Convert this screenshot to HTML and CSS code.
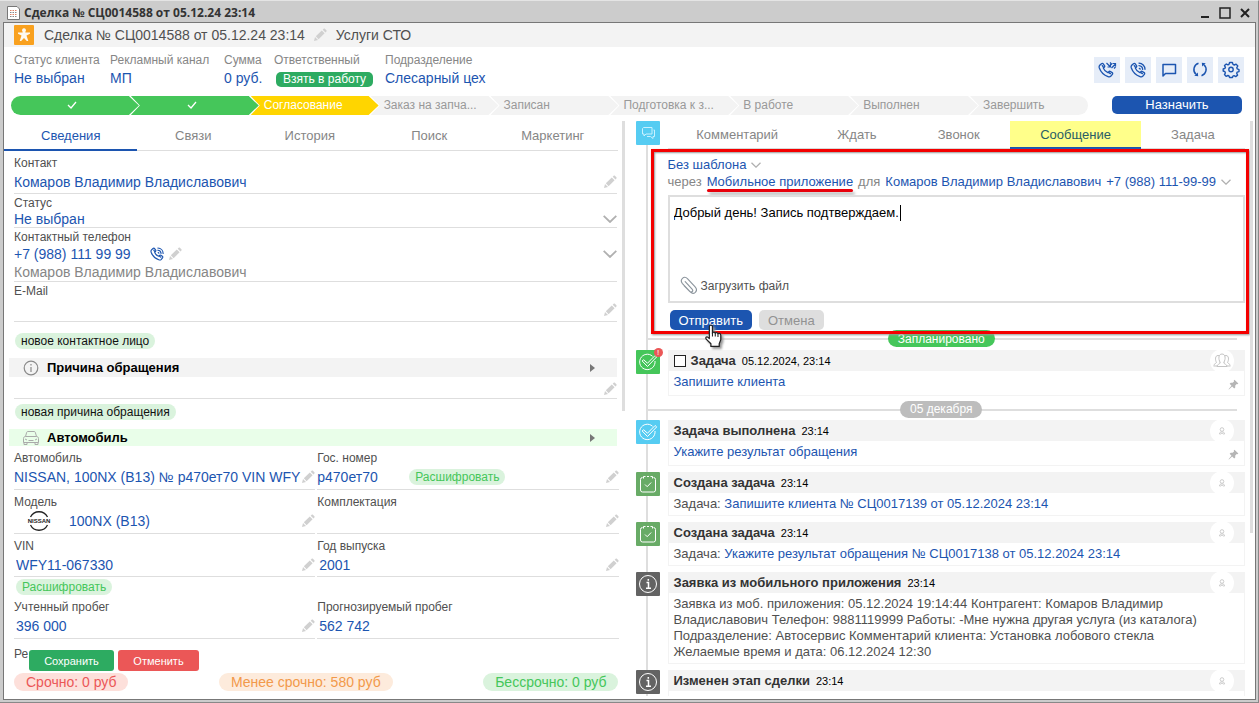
FILE: index.html
```html
<!DOCTYPE html>
<html lang="ru">
<head>
<meta charset="utf-8">
<title>Сделка № СЦ0014588 от 05.12.24 23:14</title>
<link rel="stylesheet" href="styles.css">
</head>
<body>
<svg class="sprite" aria-hidden="true">
  <symbol id="pencil" viewBox="0 0 14 14"><path fill="currentColor" d="M1 13l1-4 3 3zM2.800 8.300l6-5.800 2.800 2.800-6 5.900zM9.700 1.700l1-.9c.4-.3.800-.3 1.200 0l1.500 1.500c.4.4.3.900 0 1.300l-.9.900z"/></symbol>
  <symbol id="chevron" viewBox="0 0 14 8"><path fill="none" stroke="currentColor" stroke-width="1.800" d="M.7.8L7 7 13.300.8"/></symbol>
  <symbol id="phone" viewBox="0 0 24 24"><path fill="none" stroke="currentColor" stroke-width="2" stroke-linecap="round" stroke-linejoin="round" d="M21.500 18.500l-2.500 3c-1 1-2.600.9-4 .4C9.500 20 4 14.500 2 9c-.5-1.500-.4-3 .6-4l2.600-2.500c.9-.8 2-.7 2.700.2l1.800 2.600c.6.9.4 1.800-.3 2.500L8 9.200c1 2.700 4 5.600 6.800 6.700l1.400-1.400c.7-.7 1.600-.8 2.500-.3l2.500 1.700c.9.7 1.100 1.700.3 2.600zM6.500 5.500l2 2.800M15.800 15.500l2.800 2"/></symbol>
  <symbol id="waves" viewBox="0 0 24 24"><path fill="none" stroke="currentColor" stroke-width="2" stroke-linecap="round" d="M14 9.500c.7 0 1.200.4 1.200 1.200M13.500 5.500a6 6 0 0 1 5.500 5.500M13.500 1.700A9.500 9.500 0 0 1 22.500 11"/></symbol>
  <symbol id="person" viewBox="0 0 24 24"><g fill="none" stroke="currentColor" stroke-width="1"><circle cx="12" cy="10.500" r="1.800"/><path d="M9.500 15c0-1.500 1-2.200 2.500-2.200s2.500.7 2.500 2.200H13.500L12 14l-1.500 1z"/></g></symbol>
  <symbol id="pin" viewBox="0 0 12 12"><path fill="currentColor" d="M7 .7L11.300 5l-1 .7-.8-.2-1.600 1.700v2L6.800 10.300 4.500 8.100 1 11.400l-.4-.3 3.200-3.700-2-2.100 1.200-1.100h2L6.600 2.600l-.3-1z"/></symbol>
  <symbol id="check-circle" viewBox="0 0 24 24"><g fill="none" stroke="currentColor" stroke-width="1"><path d="M16.500 6.200A7.700 7.700 0 1 0 19 11"/><path d="M6.200 11l1.300-1.300 4 3.500 7.600-7.700 1.600 1.400-9.200 9.600z"/></g></symbol>
  <symbol id="clipboard" viewBox="0 0 24 24"><g fill="none" stroke="currentColor" stroke-width="1"><path d="M6.500 5.500a2 2 0 0 0-2 2V18a2 2 0 0 0 2 2h11a2 2 0 0 0 2-2V7.500a2 2 0 0 0-2-2M7.500 6.500v-2h2M11 4.500h2M14.500 4.500h2v2"/><path d="M9 12.500l2.200 2.200 4-4.200"/></g></symbol>
  <symbol id="info" viewBox="0 0 24 24"><g fill="none" stroke="currentColor" stroke-width="1"><circle cx="12" cy="12" r="8.500"/><path stroke-width="1.500" d="M10.500 10.500h2V16M10 16.200h5M12.300 7v1.800"/></g></symbol>
</svg>

<div class="window">
  <header class="titlebar">
    <svg class="doc-icon" viewBox="0 0 13 14"><path fill="#fff" stroke="#777" d="M.5.5h9.500l2.500 2.500v10.500H.5z"/><path stroke="#e08468" stroke-dasharray="1.500 1" d="M3 4.500h7M3 8.500h7"/><path stroke="#888" stroke-dasharray="1.500 1" d="M3 6.500h7M3 10.500h7"/></svg>
    <h1 class="window-title">Сделка № СЦ0014588 от 05.12.24 23:14</h1>
    <button class="win-btn" aria-label="Свернуть"><svg viewBox="0 0 12 12"><path stroke="#222" stroke-width="2" d="M2 10h8"/></svg></button>
    <button class="win-btn" aria-label="Развернуть"><svg viewBox="0 0 12 12"><path fill="none" stroke="#222" stroke-width="1.500" d="M1 1h10v10H1z"/></svg></button>
    <button class="win-btn" aria-label="Закрыть"><svg viewBox="0 0 12 12"><path stroke="#222" stroke-width="2" d="M2 2l8 8M10 2l-8 8"/></svg></button>
  </header>

  <main class="content">
    <div class="deal-head">
      <svg class="deal-icon" viewBox="0 0 20 20"><path fill="#fdf9ef" d="M10 3.300a2 2 0 0 1 1.500 3.300l-.2.900h4.700v1.300l-3.500 1.700 1.800 5.500h-1.500L10 13 7.200 16H5.700l1.800-5.500L4 8.800V7.500h4.700l-.2-.9A2 2 0 0 1 10 3.300z"/></svg>
      <span class="deal-name">Сделка № СЦ0014588 от 05.12.24 23:14</span>
      <button class="icon-btn" aria-label="Изменить"><svg class="i-pencil"><use href="#pencil"/></svg></button>
      <span>Услуги СТО</span>
    </div>

    <div class="summary">
      <dl class="facts">
        <div><dt>Статус клиента</dt><dd><a href="#">Не выбран</a></dd></div>
        <div><dt>Рекламный канал</dt><dd><a href="#">МП</a></dd></div>
        <div><dt>Сумма</dt><dd><a href="#">0 руб.</a></dd></div>
        <div><dt>Ответственный</dt><dd><button class="take-btn">Взять в работу</button></dd></div>
        <div><dt>Подразделение</dt><dd><a href="#">Слесарный цех</a></dd></div>
      </dl>
      <div class="tools">
        <button class="tool" aria-label="Звонки"><svg viewBox="0 0 20 20"><use href="#phone" x="1" y="2" width="16" height="16"/><path fill="none" stroke="currentColor" stroke-width="1.200" d="M9.500 3l4 4M13.500 4v3h-3M13 2.500l2 2M14.500 8l4-4M15.500 3.500h3v3M17 8.500l1.500-1.500"/></svg></button>
        <button class="tool" aria-label="Позвонить"><svg viewBox="0 0 20 20"><use href="#phone" x="2" y="2" width="16" height="16"/><use href="#waves" x="2" y="2" width="16" height="16"/></svg></button>
        <button class="tool" aria-label="Чат"><svg viewBox="0 0 20 20"><path fill="none" stroke="currentColor" stroke-width="1.500" stroke-linejoin="round" d="M4 4.500h12.500v9H6.500L4 16z"/></svg></button>
        <button class="tool" aria-label="Обновить"><svg viewBox="0 0 20 20"><path fill="none" stroke="currentColor" stroke-width="1.500" d="M8.500 3.300A6.500 6.500 0 0 0 6 14.300M11.500 15.700A6.500 6.500 0 0 0 14 4.700"/><path fill="currentColor" d="M4.300 15.700l3.900.6-.4-3.700zM15.700 3.300l-3.900-.6.4 3.700z"/></svg></button>
        <button class="tool" aria-label="Настройки"><svg viewBox="0 0 20 20"><g fill="none" stroke="currentColor" stroke-width="1.400" stroke-linejoin="round"><circle cx="10" cy="9.500" r="2.200"/><path d="M8.600 2.500h2.800l.6 1.900 1.300.6 1.800-.9 1.700 1.900-1 1.700.5 1.200 1.700.7v2l-1.800.5-.5 1.200.9 1.800-1.900 1.500-1.600-.9-1.200.5-.5 1.300H8.600l-.6-1.500-1.100-.5-1.800.8-1.600-1.800.9-1.600-.5-1.200L2.200 11V9l1.700-.6.5-1.100-.9-1.700 1.800-1.600 1.600.9L8 4.300z"/></g></svg></button>
      </div>
    </div>

    <div class="stage-row">
      <ol class="stages">
        <li class="stage done"><svg viewBox="0 0 10 8"><path d="M1 4l3 3 5-6"/></svg></li>
        <li class="stage done"><svg viewBox="0 0 10 8"><path d="M1 4l3 3 5-6"/></svg></li>
        <li class="stage current">Согласование</li>
        <li class="stage">Заказ на запча...</li>
        <li class="stage">Записан</li>
        <li class="stage">Подготовка к з...</li>
        <li class="stage">В работе</li>
        <li class="stage">Выполнен</li>
        <li class="stage">Завершить</li>
      </ol>
      <button class="assign-btn">Назначить</button>
    </div>

    <div class="columns">
      <section class="left">
        <nav class="tabs info-tabs">
          <button class="tab active">Сведения</button>
          <button class="tab">Связи</button>
          <button class="tab">История</button>
          <button class="tab">Поиск</button>
          <button class="tab">Маркетинг</button>
        </nav>
        <form class="form">
          <div class="field tall">
            <label for="contact">Контакт</label>
            <div class="value"><input id="contact" value="Комаров Владимир Владиславович"><button type="button" class="icon-btn" aria-label="Изменить"><svg class="i-pencil"><use href="#pencil"/></svg></button></div>
          </div>
          <div class="field">
            <label for="status">Статус</label>
            <div class="value tight"><select id="status"><option>Не выбран</option></select><svg class="i-chevron"><use href="#chevron"/></svg></div>
          </div>
          <div class="field">
            <span class="label">Контактный телефон</span>
            <div class="value"><a class="phone-number" href="#">+7 (988) 111 99 99</a>
              <button type="button" class="icon-btn call" aria-label="Позвонить"><svg class="i-call" viewBox="0 0 24 24"><use href="#phone"/><use href="#waves"/></svg></button>
              <button type="button" class="icon-btn" aria-label="Изменить"><svg class="i-pencil"><use href="#pencil"/></svg></button>
              <button type="button" class="icon-btn to-end" aria-label="Ещё"><svg class="i-chevron"><use href="#chevron"/></svg></button></div>
            <span class="phone-owner">Комаров Владимир Владиславович</span>
          </div>
          <div class="field email">
            <label for="email">E-Mail</label>
            <div class="value"><input id="email"><button type="button" class="icon-btn" aria-label="Изменить"><svg class="i-pencil"><use href="#pencil"/></svg></button></div>
          </div>
          <button type="button" class="chip new-contact">новое контактное лицо</button>
          <h2 class="group"><svg class="i-group" viewBox="0 0 16 16"><g fill="none" stroke="#8a8a8a" stroke-width="1.200"><circle cx="8" cy="8" r="6.800"/><path d="M8 7v5M8 4v1.500"/></g></svg>Причина обращения<span class="arrow"></span></h2>
          <div class="field blank">
            <div class="value"><input aria-label="Причина обращения"><button type="button" class="icon-btn" aria-label="Изменить"><svg class="i-pencil"><use href="#pencil"/></svg></button></div>
          </div>
          <button type="button" class="chip new-reason">новая причина обращения</button>
          <h2 class="group car"><svg class="i-group" viewBox="0 0 16 16"><g fill="none" stroke="#aaa" stroke-width="1"><path d="M2.500 6.500l1.200-4.200c.2-.5.500-.8 1-.8h6.600c.5 0 .8.300 1 .8l1.200 4.200M.5 8.500c0-1.200.8-2 2-2h11c1.200 0 2 .8 2 2v4H.5zM1 12.500v2h3v-2M12 12.500v2h3v-2M5.500 10.500h5M2 9l2 1M14 9l-2 1"/></g></svg>Автомобиль<span class="arrow"></span></h2>

          <div class="car-grid">
            <div class="field cell"><label for="car">Автомобиль</label>
              <div class="value"><input id="car" value="NISSAN, 100NX (B13) № р470ет70 VIN WFY"><button type="button" class="icon-btn" aria-label="Изменить"><svg class="i-pencil"><use href="#pencil"/></svg></button></div></div>
            <div class="field cell"><label for="plate">Гос. номер</label>
              <div class="value"><input id="plate" class="plate" value="р470ет70"><button type="button" class="chip decode">Расшифровать</button><button type="button" class="icon-btn to-end" aria-label="Изменить"><svg class="i-pencil"><use href="#pencil"/></svg></button></div></div>
            <div class="field cell"><label for="model">Модель</label>
              <div class="value"><svg class="brand" viewBox="0 0 26 20"><g fill="none" stroke="#222" stroke-width="1.300"><path d="M4.500 6a9.500 9.500 0 0 1 17 0M4.500 14a9.500 9.500 0 0 0 17 0"/></g><text x="13" y="12" text-anchor="middle" class="brand-text">NISSAN</text></svg><input id="model" value="100NX (B13)"><button type="button" class="icon-btn" aria-label="Изменить"><svg class="i-pencil"><use href="#pencil"/></svg></button></div></div>
            <div class="field cell"><label for="trim">Комплектация</label>
              <div class="value"><input id="trim"><button type="button" class="icon-btn" aria-label="Изменить"><svg class="i-pencil"><use href="#pencil"/></svg></button></div></div>
            <div class="field cell inset short"><label for="vin">VIN</label>
              <div class="value"><input id="vin" value="WFY11-067330"><button type="button" class="icon-btn" aria-label="Изменить"><svg class="i-pencil"><use href="#pencil"/></svg></button></div></div>
            <div class="field cell inset short"><label for="year">Год выпуска</label>
              <div class="value"><input id="year" value="2001"><button type="button" class="icon-btn" aria-label="Изменить"><svg class="i-pencil"><use href="#pencil"/></svg></button></div></div>
            <div class="decode-row"><button type="button" class="chip decode">Расшифровать</button></div>
            <div class="field cell inset"><label for="mileage">Учтенный пробег</label>
              <div class="value"><input id="mileage" value="396 000"><button type="button" class="icon-btn" aria-label="Изменить"><svg class="i-pencil"><use href="#pencil"/></svg></button></div></div>
            <div class="field cell inset"><label for="forecast">Прогнозируемый пробег</label>
              <div class="value"><input id="forecast" value="562 742"></div></div>
            <div class="cut-label">Ре</div>
          </div>
          <div class="form-actions">
            <button type="submit" class="save">Сохранить</button>
            <button type="button" class="discard">Отменить</button>
          </div>
        </form>
        <footer class="totals">
          <span class="total urgent">Срочно: 0 руб</span>
          <span class="total medium">Менее срочно: 580 руб</span>
          <span class="total calm">Бессрочно: 0 руб</span>
        </footer>
        <div class="thumb left-thumb"></div>
      </section>

      <section class="right">
        <article class="entry composer">
          <span class="mark blue"><svg viewBox="0 0 24 24"><g fill="none" stroke="#c9f1ff" stroke-width="1"><path d="M7.500 6.500h8.500v6.500H10l-2 2v-2H6.500V7.500z"/><path d="M17.500 9h1v6.500h-1.500v2l-2.500-2H11"/></g></svg></span>
          <div class="composer-body">
            <nav class="tabs action-tabs">
              <button class="tab">Комментарий</button>
              <button class="tab">Ждать</button>
              <button class="tab">Звонок</button>
              <button class="tab active marked">Сообщение</button>
              <button class="tab">Задача</button>
            </nav>
            <div class="message">
              <div class="line"><select aria-label="Шаблон"><option>Без шаблона</option></select><svg class="i-chevron small"><use href="#chevron"/></svg></div>
              <div class="line route"><span>через</span><a class="channel" href="#">Мобильное приложение</a><span>для</span><a class="recipient" href="#">Комаров Владимир Владиславович</a><select aria-label="Телефон"><option>+7 (988) 111-99-99</option></select><svg class="i-chevron small"><use href="#chevron"/></svg></div>
              <div class="editor">
                <textarea aria-label="Текст сообщения">Добрый день! Запись подтверждаем.</textarea>
                <span class="caret"></span>
                <button class="attach"><svg viewBox="0 0 18 20"><path fill="none" stroke="#8b949c" stroke-width="1.200" stroke-linecap="round" d="M5.500 6l7.300 7.800c.9 1 .9 1.900.2 2.600-.8.700-1.800.6-2.600-.3L2.600 8C1 6 1 3.900 2.600 2.400s3.800-1.300 5.500.5l7.700 8.200c2 2.200 2 4.600.4 6.100-1.700 1.500-4 1.300-6-.9L4.500 10.500"/></svg>Загрузить файл</button>
              </div>
              <div class="send-row">
                <button class="send">Отправить</button>
                <button class="cancel">Отмена</button>
                <svg class="hand" viewBox="0 0 18 24"><path fill="#fff" stroke="#222" stroke-width="1.200" stroke-linejoin="round" d="M5 14V2.500C5 .5 8 .5 8 2.500V9c0-1.600 2.700-1.600 2.700.2 0-1.400 2.600-1.300 2.600.6 0-1.200 2.700-1.200 2.700 1V15l-1.500 4v2.500h-8V19L2 14.500c-1-1.800.7-2.800 1.800-1.700z"/><path fill="none" stroke="#222" d="M8 8.500V12M10.700 9v3M13.300 10v2.500"/></svg>
              </div>
            </div>
            <div class="highlight"></div>
          </div>
        </article>

        <div class="divider planned"><span>Запланировано</span></div>

        <article class="entry">
          <span class="mark green"><svg><use href="#check-circle"/></svg><i class="badge">!</i></span>
          <div class="card padded">
            <h3 class="card-head"><input type="checkbox" aria-label="Задача"><span>Задача</span><time>05.12.2024, 23:14</time><span class="avatar"><svg viewBox="0 0 24 24"><g fill="#fff" stroke="#c4c4c4" stroke-width="1"><path d="M4 16.500c0-2 2-2 2.500-3C5 11 5 6.500 8 6.500s3 4.500 1.500 7M20 16.500c0-2-2-2-2.500-3C19 11 19 6.500 16 6.500s-3 4.500-1.500 7M3.500 17h17"/><path d="M7 17.500c0-2.500 3-2 3.300-4C8 10 8.500 5 12 5s4 5 1.700 8.500c.3 2 3.300 1.500 3.300 4z"/></g></svg></span></h3>
            <div class="card-body"><p><a href="#">Запишите клиента</a></p><button class="pin" aria-label="Закрепить"><svg><use href="#pin"/></svg></button></div>
          </div>
        </article>

        <div class="divider"><span>05 декабря</span></div>

        <article class="entry">
          <span class="mark blue"><svg><use href="#check-circle"/></svg></span>
          <div class="card padded">
            <h3 class="card-head"><span>Задача выполнена</span><time>23:14</time><span class="avatar"><svg><use href="#person"/></svg></span></h3>
            <div class="card-body"><p><a href="#">Укажите результат обращения</a></p><button class="pin" aria-label="Закрепить"><svg><use href="#pin"/></svg></button></div>
          </div>
        </article>
        <article class="entry">
          <span class="mark leaf"><svg><use href="#clipboard"/></svg></span>
          <div class="card">
            <h3 class="card-head"><span>Создана задача</span><time>23:14</time><span class="avatar"><svg><use href="#person"/></svg></span></h3>
            <div class="card-body"><p>Задача: <a href="#">Запишите клиента № СЦ0017139 от 05.12.2024 23:14</a></p></div>
          </div>
        </article>
        <article class="entry">
          <span class="mark leaf"><svg><use href="#clipboard"/></svg></span>
          <div class="card">
            <h3 class="card-head"><span>Создана задача</span><time>23:14</time><span class="avatar"><svg><use href="#person"/></svg></span></h3>
            <div class="card-body"><p>Задача: <a href="#">Укажите результат обращения № СЦ0017138 от 05.12.2024 23:14</a></p></div>
          </div>
        </article>
        <article class="entry">
          <span class="mark dark"><svg><use href="#info"/></svg></span>
          <div class="card">
            <h3 class="card-head"><span>Заявка из мобильного приложения</span><time>23:14</time><span class="avatar"><svg><use href="#person"/></svg></span></h3>
            <div class="card-body"><p>Заявка из моб. приложения: 05.12.2024 19:14:44 Контрагент: Комаров Владимир<br>Владиславович Телефон: 9881119999 Работы: -Мне нужна другая услуга (из каталога)<br>Подразделение: Автосервис Комментарий клиента: Установка лобового стекла<br>Желаемые время и дата: 06.12.2024 12:30</p></div>
          </div>
        </article>
        <article class="entry">
          <span class="mark dark"><svg><use href="#info"/></svg></span>
          <div class="card">
            <h3 class="card-head"><span>Изменен этап сделки</span><time>23:14</time><span class="avatar"><svg><use href="#person"/></svg></span></h3>
            <div class="card-body"></div>
          </div>
        </article>
        <div class="thumb right-thumb"></div>
      </section>
    </div>
  </main>
</div>
</body>
</html>
```
FILE: styles.css
```css
:root {
  --blue: #1c55b0;
  --green: #45c65a;
  --line: #dedede;
  --pale: #f3f3f3;
  --muted: #868686;
  --text: #505050;
}
* { box-sizing: border-box; }
body {
  margin: 0;
  font-family: "Liberation Sans", Arial, sans-serif;
  font-size: 12px;
  color: var(--text);
}
button, input, select, textarea {
  font: inherit;
  color: inherit;
  border: 0;
  padding: 0;
  margin: 0;
  background: none;
  outline: 0;
}
select { appearance: none; color: var(--blue); }
a { color: var(--blue); text-decoration: none; }
h1, h2, h3, dl, dd, ol, p { margin: 0; padding: 0; }
svg { display: block; }
.sprite { position: absolute; width: 0; height: 0; }

.window {
  height: 100vh;
  display: flex;
  flex-direction: column;
  background: #ccc;
  border-top: 1px solid #e4e4e4;
  border-right: 1px solid #888;
  border-bottom: 1px solid #888;
  padding: 0 2px 2px 3px;
}
.titlebar { display: flex; align-items: center; height: 21px; padding: 2px 5px 0 4px; }
.doc-icon { width: 13px; height: 14px; }
.window-title {
  flex: 1;
  margin-left: 4px;
  font-family: "Open Sans", sans-serif;
  font-size: 12px;
  line-height: 16px;
  font-weight: 700;
  color: #333;
}
.win-btn { width: 12px; height: 12px; margin-left: 8px; }
.content {
  flex: 1;
  min-height: 0;
  display: flex;
  flex-direction: column;
  background: #fff;
  border: 1px solid #777;
}

.deal-head {
  display: flex;
  align-items: center;
  height: 24px;
  padding-left: 10px;
  background: var(--pale);
  font-size: 14px;
}
.deal-icon { width: 20px; height: 20px; background: #f9a11f; border-radius: 1px; margin-right: 10px; }
.deal-head .icon-btn { margin: 0 9px 0 8px; }
.icon-btn { flex: none; color: #d0d0d0; }
.i-pencil { width: 14px; height: 14px; }
.i-chevron { flex: none; width: 14px; height: 8px; color: #b0b0b0; }
.i-chevron.small { width: 10px; height: 6px; }
.to-end { margin-left: auto; }

.summary { display: flex; justify-content: space-between; height: 49px; padding: 5px 9px 0 10px; }
.facts { display: grid; grid-template-columns: 96px 114px 50px 111px auto; }
.facts dt { line-height: 16px; color: var(--muted); }
.facts dd { line-height: 20px; font-size: 14px; }
.take-btn {
  display: block;
  height: 15px;
  margin: 4px 0 0 2px;
  padding: 0 7px;
  border-radius: 5px;
  background: #2dab61;
  color: #fff;
  font-size: 12px;
  line-height: 15px;
}
.tools { display: flex; gap: 5px; padding: 5px 2px 0 0; }
.tool { width: 26px; height: 26px; padding: 3px; background: #e6edf8; color: var(--blue); }
.tool svg { width: 20px; height: 20px; }

.stage-row { display: flex; align-items: flex-start; gap: 24px; padding: 0 13px 0 7px; }
.stages { flex: 1; display: flex; list-style: none; }
.stage {
  flex: 128 1 0;
  min-width: 0;
  height: 19px;
  margin-right: -8px;
  padding-left: 13px;
  line-height: 19px;
  white-space: nowrap;
  color: #999;
  background: var(--pale);
  clip-path: polygon(0 0, calc(100% - 10px) 0, 100% 50%, calc(100% - 10px) 100%, 0 100%, 9px 50%);
}
.stage:first-child { clip-path: polygon(0 0, calc(100% - 10px) 0, 100% 50%, calc(100% - 10px) 100%, 0 100%); border-radius: 10px 0 0 10px; }
.stage:last-child { flex-grow: 117; margin-right: 0; clip-path: polygon(0 0, 100% 0, 100% 100%, 0 100%, 9px 50%); border-radius: 0 10px 10px 0; }
.stage.done { background: var(--green); }
.stage.current { background: #ffd500; color: #fff; }
.stage svg { width: 10px; height: 8px; margin: 5px 0 0 43px; fill: none; stroke: #fff; stroke-width: 1.3; }
.assign-btn { width: 130px; height: 18px; border-radius: 5px; background: var(--blue); color: #fff; font-size: 13px; line-height: 18px; }

.columns { flex: 1; min-height: 0; display: flex; padding-top: 6px; }
.left { position: relative; width: calc(50% - 1px); display: flex; flex-direction: column; }
.right { position: relative; z-index: 0; flex: 1; min-width: 0; padding: 0 10px 0 7px; overflow: hidden; margin-bottom: 3px; }
.right::before { content: ""; position: absolute; left: 17px; top: 12px; bottom: 0; width: 2px; background: var(--line); }
.thumb { position: absolute; width: 3px; background: var(--line); }
.left-thumb { right: 4px; top: 0; height: 290px; }
.right-thumb { right: 2px; top: 0; height: 412px; }

.tabs { display: grid; }
.tab { border-bottom: 1px solid var(--line); color: var(--muted); font-size: 13px; }
.tab.active { border-bottom: 2px solid var(--blue); color: var(--blue); }
.info-tabs { grid-template-columns: 134fr 112fr 122fr 118fr 130fr; height: 30px; margin-right: 9px; padding-right: 2px; }
.action-tabs { grid-template-columns: 139fr 100fr 103fr 130fr 104fr; height: 28px; }
.tab.marked { background: #ffff8a; color: #295d66; }

.form { position: relative; flex: 1; min-height: 0; overflow: hidden; padding: 0 12px 0 5px; }
.field { margin-left: 5px; padding-top: 1px; border-bottom: 1px solid var(--line); }
.field label, .label { display: block; line-height: 16px; }
.value { display: flex; align-items: center; height: 18px; font-size: 14px; color: var(--blue); }
.value input { flex: 1; min-width: 0; height: 18px; }
.value select { flex: 1; }
.value.tight { height: 16px; }
.field.tall { padding: 4px 0 2px; }
.field.tall .value { margin-top: 2px; }
.phone-number { margin-right: 19px; }
.icon-btn.call { color: var(--blue); margin-right: 4px; }
.i-call { width: 14px; height: 14px; }
.phone-owner { display: block; font-size: 14px; line-height: 18px; color: var(--muted); }
.field.email .value { height: 22px; }
.field.blank { padding-top: 3px; }
.chip {
  display: block;
  height: 16px;
  padding: 0 6px;
  border-radius: 8px;
  background: #daf3dd;
  color: #111;
  line-height: 16px;
  font-size: 12px;
}
.new-contact { margin: 11px 0 9px 6px; }
.new-reason { margin: 5px 0 9px 6px; }
.chip.decode { color: var(--green); }
.group {
  display: flex;
  align-items: center;
  height: 19px;
  padding: 0 22px 0 14px;
  background: var(--pale);
  font-size: 13px;
  color: #000;
}
.group.car { height: 17px; background: #e9fee9; }
.i-group { width: 16px; height: 16px; margin-right: 8px; }
.arrow { margin-left: auto; border: 4px solid transparent; border-left: 5px solid #777; border-right: 0; }
.car-grid { display: grid; grid-template-columns: 1fr 1fr; gap: 0 2px; margin: 0 -2px 0 5px; }
.cell { margin-left: 0; padding: 4px 0 0; height: 44px; }
.cell.short { height: 43px; }
.cell .value { height: 22px; }
.cell.inset input { padding-left: 2px; }
.value .plate { flex: none; width: 92px; }
.brand { flex: none; width: 26px; height: 20px; margin: 0 17px 0 12px; overflow: visible; }
.brand-text { font-size: 6px; font-weight: 700; fill: #222; }
.decode-row { grid-column: 1 / -1; padding: 2px 0 0 2px; }
.cut-label { line-height: 16px; padding-top: 7px; }
.form-actions { position: absolute; left: 25px; bottom: 1px; display: flex; gap: 4px; }
.form-actions button { height: 21px; border-radius: 3px; color: #fff; font-size: 11px; }
.form-actions .save { width: 85px; background: #2dab61; }
.form-actions .discard { width: 81px; background: #eb5757; }
.totals { display: flex; justify-content: space-between; padding: 1px 10px 8px; }
.total { padding: 0 12px; border-radius: 9px; font-size: 14px; line-height: 18px; }
.urgent { background: #fde0db; color: #eb5757; }
.medium { background: #fdebdc; color: #f2994a; }
.calm { background: #daf3dd; color: var(--green); }

.entry { position: relative; display: flex; gap: 8px; margin-bottom: 6px; }
.mark { position: relative; flex: none; width: 24px; height: 24px; border-radius: 1px; color: #fff; }
.mark svg { width: 24px; height: 24px; }
.mark.blue { background: #56ccf2; }
.mark.green { background: var(--green); }
.mark.leaf { background: #68ab66; }
.mark.dark { background: #636363; }
.badge {
  position: absolute;
  right: -3px;
  top: -2px;
  width: 9px;
  height: 9px;
  border-radius: 50%;
  background: #eb5757;
  color: #fff;
  font-size: 8px;
  font-style: normal;
  line-height: 9px;
  text-align: center;
}
.composer { margin: 0; }
.composer-body { position: relative; flex: 1; min-width: 0; }
.highlight {
  position: absolute;
  inset: 28px -4px -4px -17px;
  border: 3px solid #f40000;
  box-shadow: 1px 1px 2px #999, inset 1px 1px 2px #999;
  pointer-events: none;
}
.message { padding-top: 7px; font-size: 13px; }
.line { display: flex; align-items: center; gap: 4px; height: 17px; color: var(--muted); }
.route { gap: 5px; }
.channel { position: relative; }
.channel::after {
  content: "";
  position: absolute;
  left: 0;
  right: 0;
  bottom: -3px;
  height: 3px;
  border-radius: 2px;
  background: #e8000b;
  box-shadow: 2px 3px 3px #bbb;
}
.editor { position: relative; height: 108px; margin-top: 5px; border: 2px solid var(--line); padding: 8px 4px 0; display: flex; flex-direction: column; }
.editor textarea { flex: 1; resize: none; line-height: 16px; color: #000; }
.caret { position: absolute; left: 230px; top: 8px; width: 1px; height: 16px; background: #000; }
.attach { display: flex; align-items: center; align-self: flex-start; gap: 4px; margin: 0 0 6px 6px; font-size: 12px; color: var(--text); }
.attach svg { width: 17px; height: 19px; }
.send-row { position: relative; display: flex; gap: 7px; padding: 7px 0 0 2px; }
.send-row button { height: 20px; padding: 0 9px; border-radius: 5px; background: #dedede; color: #929292; }
.send-row .send { background: var(--blue); color: #fff; }
.hand { position: absolute; left: 36px; top: 21px; z-index: 2; width: 19px; height: 25px; filter: drop-shadow(2px 2px 1px #999); }

.divider { position: relative; display: flex; justify-content: center; height: 18px; margin: -1px 8px 1px 10px; }
.divider::before { content: ""; position: absolute; left: 0; right: 0; top: 8px; height: 2px; background: var(--line); }
.divider span { position: relative; padding: 0 10px; border-radius: 9px; background: #bdbdbd; color: #fff; font-size: 12px; line-height: 17px; height: 17px; }
.divider.planned { z-index: -1; margin-top: 0; margin-bottom: 2px; }
.divider.planned span { background: var(--green); line-height: 18px; }

.card { flex: 1; min-width: 0; border: 1px solid var(--pale); border-width: 0 1px 1px; background: #fff; }
.card-head { display: flex; align-items: center; height: 21px; padding: 0 10px 0 5px; background: var(--pale); font-size: 13px; color: #333; }
.card-head input { width: 12px; height: 12px; margin-right: 5px; appearance: none; border: 1px solid #222; background: #fff; }
.card-head time { margin-left: 6px; font-size: 11px; font-weight: 400; color: #000; }
.avatar { margin-left: auto; width: 24px; height: 24px; border-radius: 50%; background: #fff; color: #ccc; }
.avatar svg { width: 24px; height: 24px; }
.card-body { display: flex; justify-content: space-between; padding: 3px 5px 3px; font-size: 13px; line-height: 16px; }
.padded .card-body { padding-bottom: 5px; }
.pin { align-self: flex-end; color: #b5b5b5; }
.pin svg { width: 11px; height: 11px; }
```
